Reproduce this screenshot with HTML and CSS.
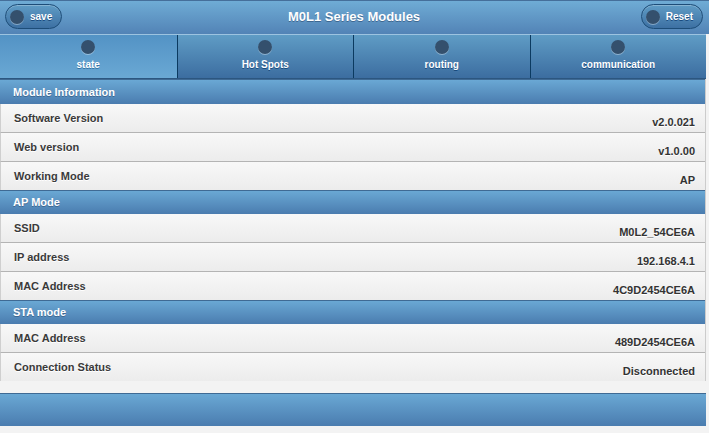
FILE: index.html
```html
<!DOCTYPE html>
<html lang="en">
<head>
<meta charset="utf-8">
<title>M0L1 Series Modules</title>
<link rel="stylesheet" href="styles.css">
</head>
<body>
<div class="page">
  <header class="topbar">
    <div class="topbar-left"><button class="pill"><span class="disc"></span><span>save</span></button></div>
    <h1 class="title">M0L1 Series Modules</h1>
    <div class="topbar-right"><button class="pill pill-reset"><span class="disc"></span><span>Reset</span></button></div>
  </header>
  <nav class="navbar">
    <a class="tab tab-active"><span class="disc"></span><span class="tab-label">state</span></a>
    <a class="tab"><span class="disc"></span><span class="tab-label">Hot Spots</span></a>
    <a class="tab"><span class="disc"></span><span class="tab-label">routing</span></a>
    <a class="tab"><span class="disc"></span><span class="tab-label">communication</span></a>
  </nav>
  <main class="content">
    <section class="group">
      <div class="group-head">Module Information</div>
      <div class="row"><span class="label">Software Version</span><span class="value">v2.0.021</span></div>
      <div class="row"><span class="label">Web version</span><span class="value">v1.0.00</span></div>
      <div class="row"><span class="label">Working Mode</span><span class="value">AP</span></div>
    </section>
    <section class="group">
      <div class="group-head">AP Mode</div>
      <div class="row"><span class="label">SSID</span><span class="value">M0L2_54CE6A</span></div>
      <div class="row"><span class="label">IP address</span><span class="value">192.168.4.1</span></div>
      <div class="row"><span class="label">MAC Address</span><span class="value">4C9D2454CE6A</span></div>
    </section>
    <section class="group">
      <div class="group-head">STA mode</div>
      <div class="row"><span class="label">MAC Address</span><span class="value">489D2454CE6A</span></div>
      <div class="row row-last"><span class="label">Connection Status</span><span class="value">Disconnected</span></div>
    </section>
  </main>
  <footer class="footbar"></footer>
</div>
</body>
</html>
```

FILE: styles.css
```css
* { box-sizing: border-box; }
html, body { margin: 0; padding: 0; }
body {
  background: #f3f3f3;
  font-family: "Liberation Sans", Arial, sans-serif;
  width: 709px;
  height: 433px;
  overflow: hidden;
}
.page {
  width: 709px;
}
.topbar {
  height: 34px;
  border-top: 1px solid #456f9a;
  background: linear-gradient(#6facd5, #5283b6);
  display: grid;
  grid-template-columns: 1fr auto 1fr;
  align-items: start;
  padding: 3px 6px 0 5px;
}
.topbar-right { justify-self: end; }
.title {
  margin: 0;
  font-size: 13px;
  font-weight: bold;
  color: #fff;
  text-shadow: 0 1px 0 #3e6790;
  line-height: 26px;
}
.pill {
  display: flex;
  align-items: center;
  gap: 6px;
  height: 25px;
  padding: 0 9px 0 4px;
  border: 1px solid #1d4d78;
  border-radius: 13px;
  background: linear-gradient(#5f9cc5, #3d70a3);
  color: #fff;
  font-family: "Liberation Sans", Arial, sans-serif;
  font-size: 10px;
  font-weight: bold;
  text-shadow: 0 1px 0 #194b7e;
  box-shadow: inset 0 1px 0 rgba(255,255,255,0.25);
}
.pill-reset { padding-right: 9px; }
.disc {
  display: block;
  width: 14px;
  height: 14px;
  border-radius: 50%;
  background: #34506d;
  box-shadow: 0 1px 0 rgba(255,255,255,0.35);
  flex: none;
}
.navbar {
  width: 706px;
  display: grid;
  grid-template-columns: repeat(4, 1fr);
  border-top: 1px solid #9cc3e0;
  border-bottom: 1px solid #2c5680;
}
.tab {
  height: 43px;
  display: flex;
  flex-direction: column;
  align-items: center;
  padding-top: 5px;
  background: linear-gradient(#5f9cc5, #3c6da0);
  color: #fff;
  font-size: 10px;
  font-weight: bold;
  text-shadow: 0 1px 0 #194b7e;
}
.tab + .tab { border-left: 1px solid #0b3a60; }
.tab-active {
  background: linear-gradient(#5393c5, #6aa8d4);
  text-shadow: 0 1px 0 #3373a5;
}
.tab-label {
  margin-top: 4px;
  line-height: 14px;
}
.content {
  width: 706px;
  border-right: 1px solid #ccc;
}
.group-head {
  height: 24px;
  border-top: 1px solid #3f6a94;
  background: linear-gradient(#6aa8d4, #4a7caf);
  color: #fff;
  font-size: 11px;
  font-weight: bold;
  text-shadow: 0 1px 0 #3e6790;
  padding-left: 13px;
  line-height: 22px;
}
.group:first-child .group-head { height: 25px; line-height: 24px; }
.row {
  height: 29px;
  display: flex;
  align-items: center;
  justify-content: space-between;
  padding: 0 10px 0 13px;
  border-left: 1px solid #cfcfcf;
  border-bottom: 1px solid #b4b4b4;
  background: linear-gradient(#f8f8f8, #ececec);
  font-size: 11px;
  font-weight: bold;
  color: #333;
  text-shadow: 0 1px 0 #fff;
}
.label { color: #3a3a3a; }
.group .row:last-child { height: 28px; border-bottom: none; }
.row-last { border-bottom: none; }
.value { padding-top: 8px; }
.footbar {
  margin-top: 12px;
  width: 706px;
  height: 33px;
  border-top: 1px solid #3f6a94;
  background: linear-gradient(#6aa8d4, #4a7caf);
}
```
